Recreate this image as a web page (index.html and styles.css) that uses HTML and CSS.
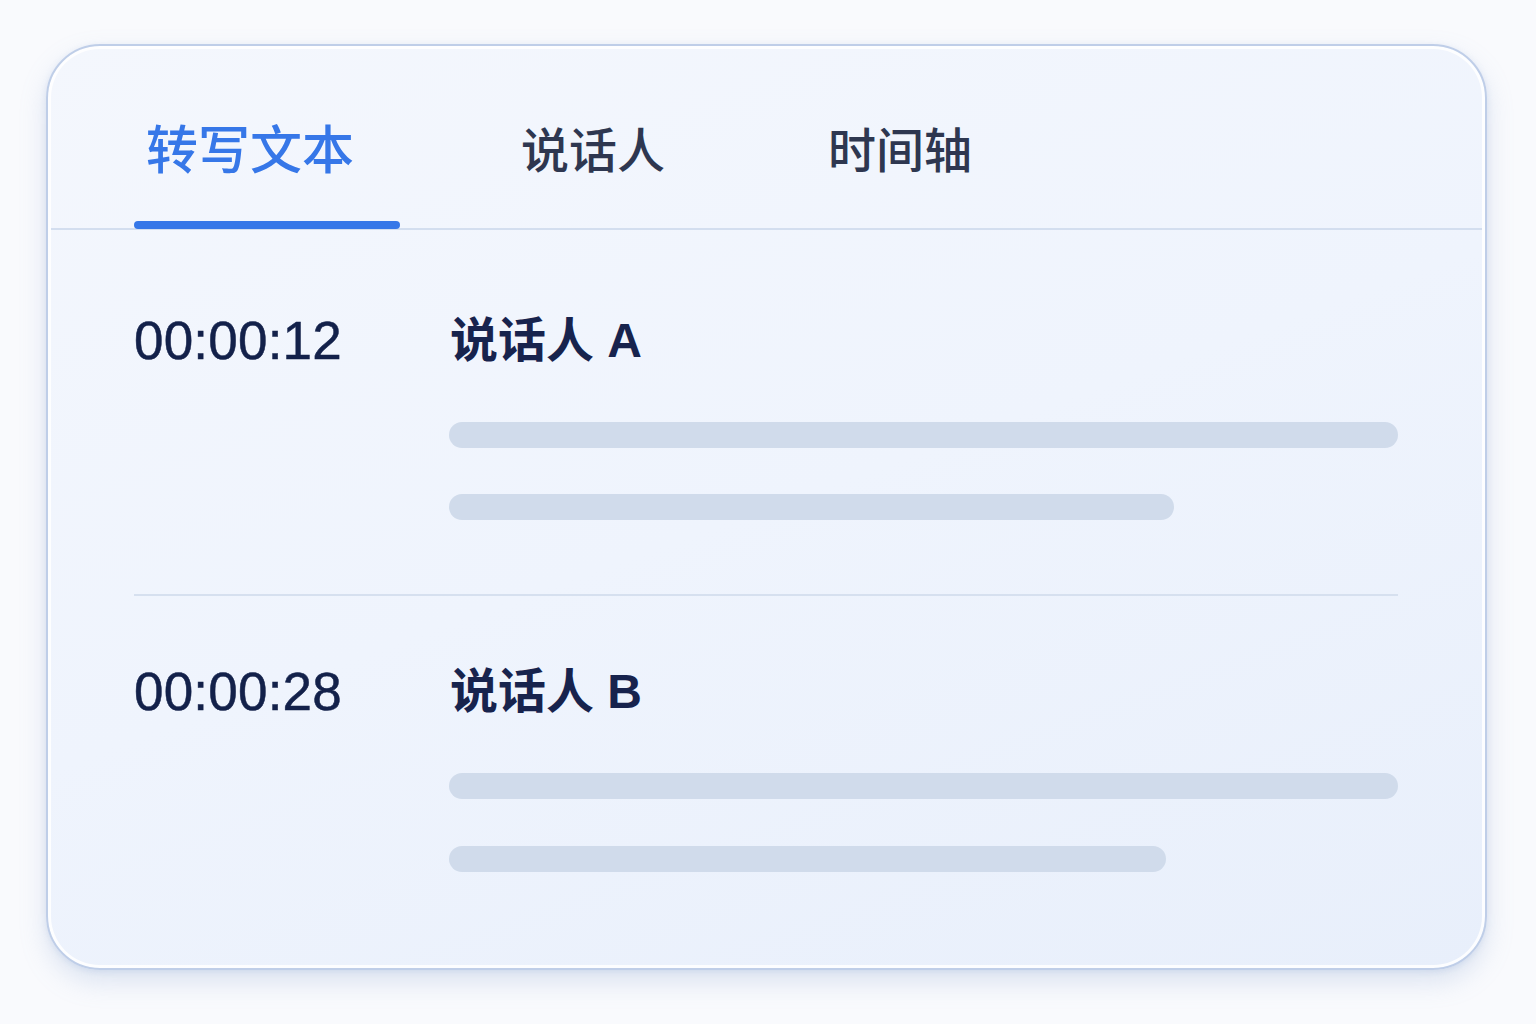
FILE: index.html
```html
<!DOCTYPE html>
<html lang="zh-CN">
<head>
<meta charset="utf-8">
<title>转写</title>
<link rel="stylesheet" href="styles.css">
</head>
<body>
<div class="card">
  <div class="tabs">
    <div class="tab active">转写文本<span class="underline"></span></div>
    <div class="tab">说话人</div>
    <div class="tab">时间轴</div>
  </div>
  <div class="entry first">
    <div class="time">00:00:12</div>
    <div class="body">
      <div class="speaker">说话人 A</div>
      <div class="bar bar-full"></div>
      <div class="bar bar-short-a"></div>
    </div>
  </div>
  <div class="entry">
    <div class="time">00:00:28</div>
    <div class="body">
      <div class="speaker">说话人 B</div>
      <div class="bar bar-full"></div>
      <div class="bar bar-short-b"></div>
    </div>
  </div>
</div>
</body>
</html>
```

FILE: styles.css
```css
html, body {
  margin: 0;
  padding: 0;
}
body {
  width: 1536px;
  height: 1024px;
  background: #f9fafd;
  font-family: "Liberation Sans", "Noto Sans CJK SC", sans-serif;
  overflow: hidden;
}
.card {
  box-sizing: border-box;
  margin: 44px 0 0 46px;
  width: 1441px;
  height: 926px;
  border: 2px solid #bfcee8;
  border-radius: 54px;
  background: linear-gradient(160deg, #f4f7fd 0%, #eff4fd 50%, #e8effb 100%);
  box-shadow: inset 0 0 0 3px rgba(255, 255, 255, 0.85),
              0 12px 26px rgba(140, 165, 210, 0.26),
              0 2px 6px rgba(140, 165, 210, 0.2);
}
.tabs {
  box-sizing: border-box;
  height: 184px;
  border-bottom: 2px solid #d3deef;
  margin: 0 3px;
  padding-left: 95px;
  display: grid;
  grid-template-columns: 375px 307px auto;
}
.tab {
  position: relative;
  padding-top: 71px;
  font-family: "Noto Sans CJK SC", sans-serif;
  font-size: 48px;
  line-height: 60px;
  font-weight: 500;
  color: #2e3750;
}
.tab.active {
  font-size: 52px;
  color: #3677e8;
}
.underline {
  position: absolute;
  left: -12px;
  bottom: -1px;
  width: 266px;
  height: 8px;
  border-radius: 4px;
  background: #3677e8;
}
.entry {
  display: flex;
  margin: 0 87px 0 86px;
  padding: 66px 0 0 0;
}
.entry.first {
  padding-top: 81px;
  padding-bottom: 74px;
  border-bottom: 2px solid #d6e0ef;
}
.time {
  width: 315px;
  font-size: 53px;
  line-height: 60px;
  color: #13214a;
  letter-spacing: 0.2px;
  -webkit-text-stroke: 0.5px #13214a;
}
.body {
  flex: 1;
}
.speaker {
  padding-left: 1px;
  font-size: 48px;
  line-height: 60px;
  font-weight: 700;
  color: #17234d;
}
.bar {
  height: 26px;
  border-radius: 13px;
  background: #d0dbeb;
}
.bar-full {
  margin-top: 51px;
}
.bar-short-a {
  margin-top: 46px;
  width: 725px;
}
.bar-short-b {
  margin-top: 47px;
  width: 717px;
}
```
